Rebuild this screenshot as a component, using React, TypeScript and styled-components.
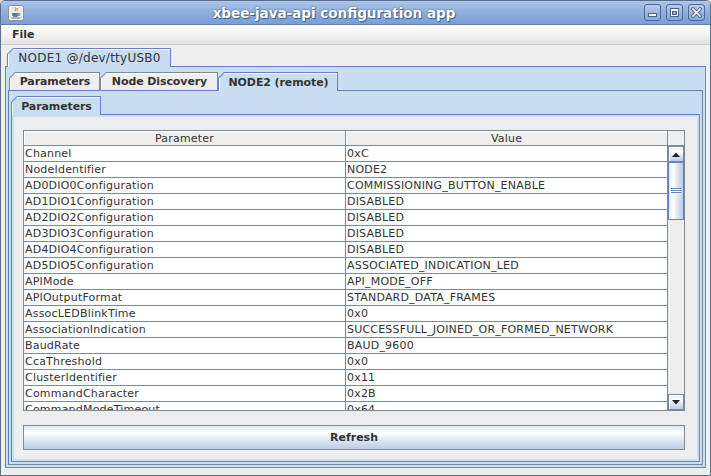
import React from "react";
import styled, { createGlobalStyle } from "styled-components";

const GlobalStyle = createGlobalStyle`
  html, body {
    margin: 0;
    padding: 0;
    width: 711px;
    height: 476px;
    overflow: hidden;
    background: #d8d8d8;
  }
  body {
    font-family: "DejaVu Sans", "Liberation Sans", sans-serif;
  }
  * { box-sizing: border-box; }
`;

const FONT = `"DejaVu Sans", "Liberation Sans", sans-serif`;
const PRIMARY1 = "#6382bf";
const SECONDARY1 = "#7a8a99";
const SELECTED = "#c8ddf2";
const CONTROL = "#eeeeee";
const OCEAN_V = `linear-gradient(to bottom, #dde8f3 0%, #ffffff 30%, #dde8f3 60%, #b8cfe5 100%)`;
const OCEAN_H = `linear-gradient(to right, #dde8f3 0%, #ffffff 30%, #dde8f3 60%, #b8cfe5 100%)`;

const Window = styled.div`
  width: 711px;
  height: 476px;
  display: flex;
  flex-direction: column;
  background: ${CONTROL};
  border: 1px solid #5a6f8f;
  border-radius: 5px 5px 0 0;
  overflow: hidden;
`;

const TitleBar = styled.div`
  height: 24px;
  flex: 0 0 24px;
  display: flex;
  align-items: center;
  padding: 0 5px 0 7px;
  background: linear-gradient(to bottom, #aec6e9 0%, #92b0dd 45%, #7d9ed3 100%);
  border-bottom: 1px solid #5f7fb3;
`;

const TitleText = styled.div`
  flex: 1;
  text-align: center;
  font: bold 13.5px ${FONT};
  color: #ffffff;
  text-shadow: 0 0 2px #39567f, 1px 1px 0 #4a6794;
  white-space: nowrap;
`;

const WinButtons = styled.div`
  display: flex;
  gap: 5px;
`;

const WinButton = styled.div`
  width: 17px;
  height: 17px;
  border: 1px solid #4f6898;
  border-radius: 3px;
  background: linear-gradient(to bottom, #b9cdec 0%, #97b3df 55%, #8aa7d8 100%);
  display: flex;
  align-items: center;
  justify-content: center;
`;

const MenuBar = styled.div`
  height: 20px;
  flex: 0 0 20px;
  display: flex;
  align-items: center;
  padding-left: 11px;
  background: linear-gradient(to bottom, #ffffff 0%, #f3f3f3 50%, #e2e2e2 100%);
  border-bottom: 1px solid #cfcfcf;
`;

const MenuItem = styled.span`
  font: bold 11px ${FONT};
  color: #333333;
`;

const Body = styled.div`
  flex: 1;
  display: flex;
  flex-direction: column;
  padding: 3px 4px 7px 4px;
  min-height: 0;
`;

const TabbedPane = styled.div<{ $inset?: number }>`
  flex: 1;
  display: flex;
  flex-direction: column;
  min-height: 0;
  padding-top: ${(p) => p.$inset ?? 0}px;
`;

const TabRow = styled.div<{ $left: number }>`
  position: relative;
  z-index: 1;
  height: 18px;
  display: flex;
  align-items: flex-start;
  padding-left: ${(p) => p.$left}px;
`;

const TabShell = styled.div<{ $selected?: boolean; $w: number }>`
  width: ${(p) => p.$w}px;
  height: ${(p) => (p.$selected ? 19 : 18)}px;
  padding: 1px 1px 0 1px;
  background: ${(p) => (p.$selected ? PRIMARY1 : SECONDARY1)};
  clip-path: polygon(6px 0, 100% 0, 100% 100%, 0 100%, 0 6px);
`;

const TabFace = styled.div<{ $selected?: boolean; $bold?: boolean; $size: number }>`
  height: 100%;
  display: flex;
  align-items: center;
  justify-content: center;
  padding-left: 1px;
  background: ${(p) => (p.$selected ? SELECTED : CONTROL)};
  box-shadow: inset 1px 1px 0 #ffffff;
  clip-path: polygon(5.4px 0, 100% 0, 100% 100%, 0 100%, 0 5.4px);
  font-family: ${FONT};
  font-size: ${(p) => p.$size}px;
  font-weight: ${(p) => (p.$bold ? "bold" : "normal")};
  letter-spacing: ${(p) => (p.$bold ? "-0.1px" : "0.25px")};
  color: #333333;
  white-space: nowrap;
`;

const Pane = styled.div`
  flex: 1;
  min-height: 0;
  display: flex;
  flex-direction: column;
  border: 1px solid ${PRIMARY1};
  border-right-color: ${SECONDARY1};
  border-bottom-color: ${SECONDARY1};
  padding: 2px;
  background: ${SELECTED};
`;

const Content = styled.div`
  flex: 1;
  min-height: 0;
  display: flex;
  flex-direction: column;
  gap: 14px;
  background: ${CONTROL};
  padding: 13px 12px 9px 9px;
`;

const ScrollPane = styled.div`
  flex: 1;
  min-height: 0;
  display: flex;
  flex-direction: column;
  border: 1px solid ${SECONDARY1};
  background: ${CONTROL};
`;

const HeaderRow = styled.div`
  height: 15px;
  flex: 0 0 15px;
  display: flex;
  border-bottom: 1px solid ${SECONDARY1};
`;

const HeaderCell = styled.div`
  width: 322px;
  display: flex;
  align-items: center;
  justify-content: center;
  border-right: 1px solid ${SECONDARY1};
  box-shadow: inset 1px 1px 0 #ffffff;
  background: ${CONTROL};
  font: 11px ${FONT};
  letter-spacing: 0.2px;
  color: #333333;
`;

const HeaderCorner = styled.div`
  width: 16px;
  background: ${CONTROL};
`;

const ScrollBody = styled.div`
  flex: 1;
  min-height: 0;
  display: flex;
`;

const Viewport = styled.div`
  width: 644px;
  overflow: hidden;
  background: #ffffff;
`;

const Row = styled.div`
  height: 16px;
  display: flex;
`;

const Cell = styled.div`
  width: 322px;
  height: 16px;
  padding: 0 2px 0 1px;
  display: flex;
  align-items: center;
  border-right: 1px solid ${SECONDARY1};
  border-bottom: 1px solid ${SECONDARY1};
  font: 11px ${FONT};
  letter-spacing: 0.2px;
  color: #333333;
  white-space: nowrap;
  overflow: hidden;
  background: #ffffff;
`;

const ScrollBar = styled.div`
  width: 16px;
  display: flex;
  flex-direction: column;
  background: ${CONTROL};
`;

const ArrowButton = styled.div`
  height: 16px;
  flex: 0 0 16px;
  display: flex;
  align-items: center;
  justify-content: center;
  border: 1px solid ${SECONDARY1};
  box-shadow: inset 1px 1px 0 #ffffff;
  background: ${OCEAN_V};
`;

const Track = styled.div`
  flex: 1;
  display: flex;
  flex-direction: column;
`;

const Thumb = styled.div`
  height: 58px;
  border: 1px solid ${PRIMARY1};
  background: ${OCEAN_H};
  display: flex;
  align-items: center;
  justify-content: center;
`;

const Grip = styled.div`
  width: 10px;
  height: 6px;
  background: repeating-linear-gradient(
    to bottom,
    ${PRIMARY1} 0px,
    ${PRIMARY1} 1px,
    #ffffff 1px,
    #ffffff 2px
  );
`;

const Button = styled.div`
  height: 25px;
  flex: 0 0 25px;
  display: flex;
  align-items: center;
  justify-content: center;
  border: 1px solid ${SECONDARY1};
  background: ${OCEAN_V};
  font: bold 11px ${FONT};
  color: #333333;
`;

const rows: [string, string][] = [
  ["Channel", "0xC"],
  ["NodeIdentifier", "NODE2"],
  ["AD0DIO0Configuration", "COMMISSIONING_BUTTON_ENABLE"],
  ["AD1DIO1Configuration", "DISABLED"],
  ["AD2DIO2Configuration", "DISABLED"],
  ["AD3DIO3Configuration", "DISABLED"],
  ["AD4DIO4Configuration", "DISABLED"],
  ["AD5DIO5Configuration", "ASSOCIATED_INDICATION_LED"],
  ["APIMode", "API_MODE_OFF"],
  ["APIOutputFormat", "STANDARD_DATA_FRAMES"],
  ["AssocLEDBlinkTime", "0x0"],
  ["AssociationIndication", "SUCCESSFULL_JOINED_OR_FORMED_NETWORK"],
  ["BaudRate", "BAUD_9600"],
  ["CcaThreshold", "0x0"],
  ["ClusterIdentifier", "0x11"],
  ["CommandCharacter", "0x2B"],
  ["CommandModeTimeout", "0x64"],
  ["CoordinatorEnable", "DISABLED"],
];

const JavaIcon = () => (
  <svg width="16" height="16" viewBox="0 0 16 16">
    <rect x="0.5" y="0.5" width="15" height="15" rx="2" fill="#eaeaea" stroke="#8c8c8c" />
    <rect x="1.5" y="1.5" width="13" height="13" rx="1.5" fill="none" stroke="#ffffff" />
    <path d="M7.5 2.5c1.5 1.2-1.2 2.2 0 3.6M9.2 3.2c1 0.9-0.8 1.6 0.2 2.6" stroke="#e76f00" strokeWidth="1" fill="none" />
    <path d="M4 8h6.5v1.5c0 1.4-1.2 2.5-2.6 2.5H6.6C5.2 12 4 10.9 4 9.5z" fill="#5382a1" />
    <path d="M10.5 8.6h1.2c0.8 0 0.8 1.8 0 1.8h-1.4" stroke="#5382a1" strokeWidth="0.9" fill="none" />
    <path d="M3.5 13h9" stroke="#5382a1" strokeWidth="1" />
  </svg>
);

const MinGlyph = () => (
  <svg width="11" height="11" viewBox="0 0 11 11">
    <rect x="1.5" y="6.5" width="8" height="3" fill="#ffffff" stroke="#4a628f" />
  </svg>
);

const MaxGlyph = () => (
  <svg width="11" height="11" viewBox="0 0 11 11">
    <rect x="1.5" y="1.5" width="8" height="8" fill="#ffffff" stroke="#4a628f" />
    <rect x="3.5" y="4.5" width="4" height="3" fill="#8eaad8" stroke="#4a628f" />
  </svg>
);

const CloseGlyph = () => (
  <svg width="11" height="11" viewBox="0 0 11 11">
    <path d="M2 2L9 9M9 2L2 9" stroke="#4a628f" strokeWidth="3.4" strokeLinecap="square" />
    <path d="M2 2L9 9M9 2L2 9" stroke="#ffffff" strokeWidth="1.6" strokeLinecap="square" />
  </svg>
);

const UpArrow = () => (
  <svg width="8" height="5" viewBox="0 0 8 5">
    <path d="M0 5L4 0.5L8 5z" fill="#222222" />
  </svg>
);

const DownArrow = () => (
  <svg width="8" height="5" viewBox="0 0 8 5">
    <path d="M0 0L4 4.5L8 0z" fill="#222222" />
  </svg>
);

type TabDef = { label: string; width: number; selected?: boolean; bold?: boolean; size?: number };

const Tabs: React.FC<{ tabs: TabDef[]; left: number }> = ({ tabs, left }) => (
  <TabRow $left={left}>
    {tabs.map((t) => (
      <TabShell key={t.label} $selected={t.selected} $w={t.width}>
        <TabFace $selected={t.selected} $bold={t.bold !== false} $size={t.size ?? 11}>
          {t.label}
        </TabFace>
      </TabShell>
    ))}
  </TabRow>
);

export default function App() {
  return (
    <>
      <GlobalStyle />
      <Window>
        <TitleBar>
          <JavaIcon />
          <TitleText>xbee-java-api configuration app</TitleText>
          <WinButtons>
            <WinButton><MinGlyph /></WinButton>
            <WinButton><MaxGlyph /></WinButton>
            <WinButton><CloseGlyph /></WinButton>
          </WinButtons>
        </TitleBar>
        <MenuBar>
          <MenuItem>File</MenuItem>
        </MenuBar>
        <Body>
          <TabbedPane>
            <Tabs
              left={2}
              tabs={[{ label: "NODE1 @/dev/ttyUSB0", width: 164, selected: true, bold: false, size: 12 }]}
            />
            <Pane>
              <TabbedPane $inset={3}>
                <Tabs
                  left={1}
                  tabs={[
                    { label: "Parameters", width: 91 },
                    { label: "Node Discovery", width: 118 },
                    { label: "NODE2 (remote)", width: 120, selected: true },
                  ]}
                />
                <Pane>
                  <TabbedPane $inset={3}>
                    <Tabs left={0} tabs={[{ label: "Parameters", width: 90, selected: true }]} />
                    <Pane>
                      <Content>
                        <ScrollPane>
                          <HeaderRow>
                            <HeaderCell>Parameter</HeaderCell>
                            <HeaderCell>Value</HeaderCell>
                            <HeaderCorner />
                          </HeaderRow>
                          <ScrollBody>
                            <Viewport>
                              {rows.map(([k, v]) => (
                                <Row key={k}>
                                  <Cell>{k}</Cell>
                                  <Cell>{v}</Cell>
                                </Row>
                              ))}
                            </Viewport>
                            <ScrollBar>
                              <ArrowButton><UpArrow /></ArrowButton>
                              <Track>
                                <Thumb><Grip /></Thumb>
                              </Track>
                              <ArrowButton><DownArrow /></ArrowButton>
                            </ScrollBar>
                          </ScrollBody>
                        </ScrollPane>
                        <Button>Refresh</Button>
                      </Content>
                    </Pane>
                  </TabbedPane>
                </Pane>
              </TabbedPane>
            </Pane>
          </TabbedPane>
        </Body>
      </Window>
    </>
  );
}
